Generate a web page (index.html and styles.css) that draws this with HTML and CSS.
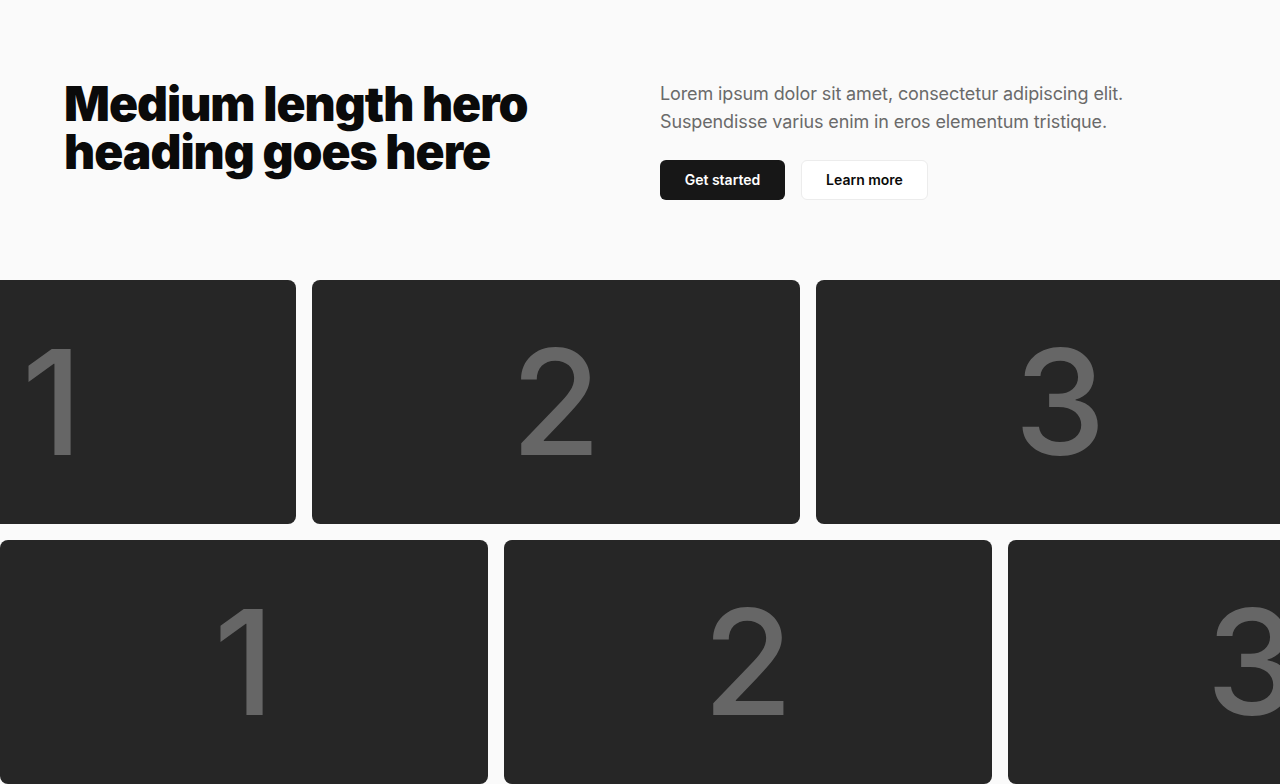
FILE: index.html
```html
<!DOCTYPE html>
<html lang="en">
<head>
<meta charset="utf-8">
<title>Hero</title>
<link rel="stylesheet" href="styles.css">
</head>
<body>
<main class="page">
  <section class="hero">
    <div class="hero-grid">
      <h1 class="hero-title">Medium length hero heading goes here</h1>
      <div class="hero-side">
        <p class="hero-text">Lorem ipsum dolor sit amet, consectetur adipiscing elit. Suspendisse varius enim in eros elementum tristique.</p>
        <div class="hero-actions">
          <a class="btn btn-primary" href="#">Get started</a>
          <a class="btn btn-secondary" href="#">Learn more</a>
        </div>
      </div>
    </div>
  </section>
  <section class="gallery">
    <div class="row row-shift">
      <div class="card"><span class="num">1</span></div>
      <div class="card"><span class="num">2</span></div>
      <div class="card"><span class="num">3</span></div>
    </div>
    <div class="row">
      <div class="card"><span class="num">1</span></div>
      <div class="card"><span class="num">2</span></div>
      <div class="card"><span class="num">3</span></div>
    </div>
  </section>
</main>
</body>
</html>
```

FILE: styles.css
```css
* { box-sizing: border-box; }
html, body { margin: 0; padding: 0; }
body {
  background: #fafafa;
  font-family: "Inter", "Noto Sans", "Liberation Sans", sans-serif;
  color: #0a0a0a;
  overflow: hidden;
}
.page { width: 1280px; height: 784px; overflow: hidden; }
.hero { padding: 80px 64px 80px; }
.hero-grid {
  display: grid;
  grid-template-columns: 556px 556px;
  column-gap: 40px;
  align-items: start;
}
.hero-title {
  margin: 0;
  font-size: 48px;
  line-height: 48px;
  font-weight: 900;
  letter-spacing: -1px;
  color: #0a0a0a;
  max-width: 490px;
}
.hero-text {
  margin: 0;
  font-size: 18px;
  line-height: 28px;
  letter-spacing: -0.12px;
  color: #6a6a6a;
}
.hero-actions {
  display: flex;
  gap: 16px;
  margin-top: 24px;
}
.btn {
  display: inline-flex;
  align-items: center;
  justify-content: center;
  height: 40px;
  padding: 0 24px 1px;
  border-radius: 6px;
  font-size: 14px;
  font-weight: 600;
  text-decoration: none;
}
.btn-primary { background: #171717; color: #ffffff; width: 125px; }
.btn-secondary { background: #ffffff; color: #0a0a0a; border: 1px solid #ececec; width: 127px; }
.gallery {
  display: flex;
  flex-direction: column;
  gap: 16px;
}
.row { display: flex; gap: 16px; }
.row-shift { transform: translateX(-192px); }
.card {
  flex: 0 0 488px;
  height: 244px;
  background: #262626;
  border-radius: 8px;
  display: flex;
  align-items: center;
  justify-content: center;
}
.num {
  font-size: 146px;
  line-height: 1;
  font-weight: 500;
  color: #666666;
}
```
